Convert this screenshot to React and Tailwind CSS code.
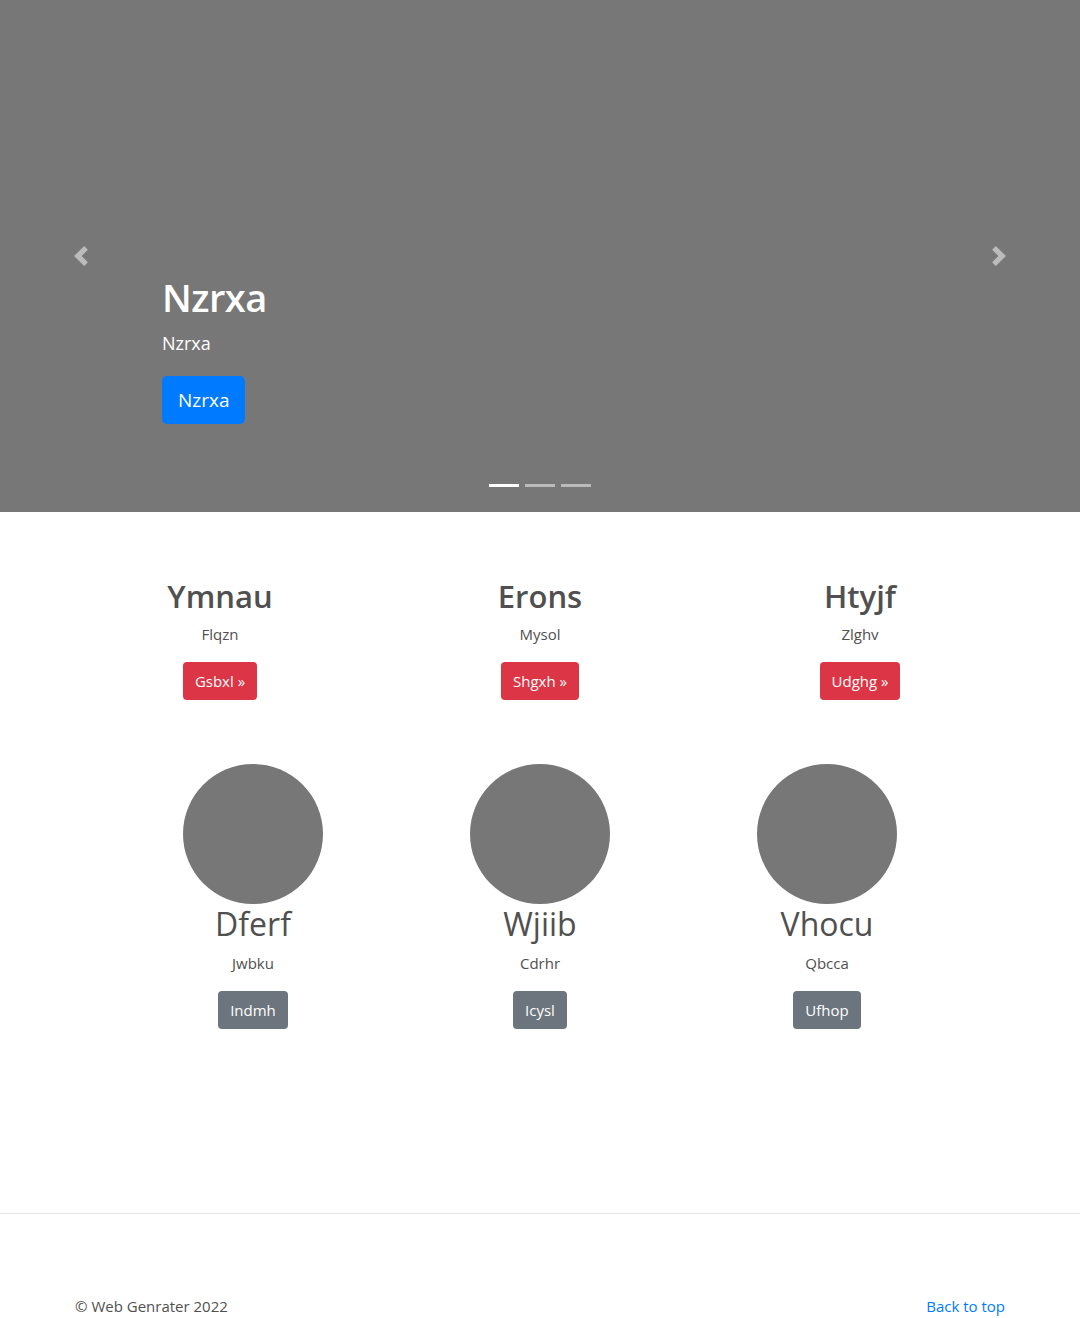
import React from 'react';

const features = [
  { title: 'Ymnau', text: 'Flqzn', btn: 'Gsbxl' },
  { title: 'Erons', text: 'Mysol', btn: 'Shgxh' },
  { title: 'Htyjf', text: 'Zlghv', btn: 'Udghg' },
];

const people = [
  { title: 'Dferf', text: 'Jwbku', btn: 'Indmh' },
  { title: 'Wjiib', text: 'Cdrhr', btn: 'Icysl' },
  { title: 'Vhocu', text: 'Qbcca', btn: 'Ufhop' },
];

const Chevron = ({ dir }) => (
  <svg width="20" height="20" viewBox="0 0 8 8" fill="#fff" className="opacity-50">
    {dir === 'left' ? (
      <path d="M5.25 0l-4 4 4 4 1.5-1.5L4.25 4l2.5-2.5L5.25 0z" />
    ) : (
      <path d="M2.75 0l-1.5 1.5L3.75 4l-2.5 2.5L2.75 8l4-4-4-4z" />
    )}
  </svg>
);

const App = () => {
  return (
    <div className="min-h-[1318px] bg-white text-[#212529] font-['Open_Sans',sans-serif] text-[16px] leading-6">
      {/* carousel */}
      <div className="relative h-[512px] bg-[#777777]">
        <button className="absolute left-0 top-0 bottom-0 w-[15%] flex items-center justify-center">
          <Chevron dir="left" />
        </button>
        <button className="absolute right-0 top-0 bottom-0 w-[15%] flex items-center justify-center">
          <Chevron dir="right" />
        </button>

        <div className="absolute left-[15%] right-[15%] bottom-[52px] pt-5 pb-5 text-white">
          <h1 className="text-[38px] font-semibold leading-[46px] mb-[9px] tracking-[-0.5px]">Nzrxa</h1>
          <p className="text-[18px] leading-7 mb-[19px]">Nzrxa</p>
          <button className="bg-[#007bff] text-white text-[19px] leading-[28px] px-4 py-[10px] rounded-[5px] mb-4">
            Nzrxa
          </button>
        </div>

        <div className="absolute bottom-[25px] left-0 right-0 flex justify-center gap-[6px]">
          <span className="w-[30px] h-[3px] bg-white" />
          <span className="w-[30px] h-[3px] bg-white opacity-50" />
          <span className="w-[30px] h-[3px] bg-white opacity-50" />
        </div>
      </div>

      {/* marketing */}
      <div className="w-[960px] mx-auto pt-[65px]">
        <div className="grid grid-cols-3">
          {features.map((f) => (
            <div key={f.title} className="px-[15px] flex flex-col items-center text-center">
              <h2 className="text-[31px] leading-[38px] font-semibold text-[#505050]">{f.title}</h2>
              <p className="mt-[7px] text-[15px] leading-6 text-[#505050]">{f.text}</p>
              <button className="mt-[16px] bg-[#dc3545] text-white text-[15px] leading-6 px-3 py-[7px] rounded">
                {f.btn} »
              </button>
            </div>
          ))}
        </div>

        <div className="grid grid-cols-3 w-[861px] mx-auto mt-[64px]">
          {people.map((p) => (
            <div key={p.title} className="flex flex-col items-center text-center">
              <div className="w-[140px] h-[140px] rounded-full bg-[#777777]" />
              <h2 className="mt-[1px] text-[32px] leading-[38px] font-normal text-[#505050]">{p.title}</h2>
              <p className="mt-[8px] text-[15px] leading-6 text-[#505050]">{p.text}</p>
              <button className="mt-[16px] bg-[#6c757d] text-white text-[15px] leading-6 px-3 py-[7px] rounded">
                {p.btn}
              </button>
            </div>
          ))}
        </div>
      </div>

      {/* footer */}
      <div className="mt-[184px] border-t border-[#e5e5e5]">
        <footer className="w-[960px] mx-auto px-[15px] pt-[80px] flex justify-between text-[15px] leading-6">
          <p className="text-[#505050]">© Web Genrater 2022</p>
          <a href="#" className="text-[#007bff]">Back to top</a>
        </footer>
      </div>
    </div>
  );
};

export default App;
